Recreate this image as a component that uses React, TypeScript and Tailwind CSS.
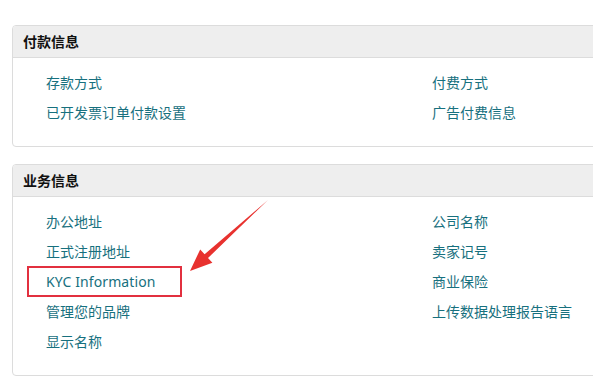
const font = { fontFamily: '"Noto Sans", "Noto Sans CJK SC", sans-serif' };

type Section = { title: string; left: string[]; right: string[] };

const sections: Section[] = [
  { title: "付款信息", left: ["存款方式", "已开发票订单付款设置"], right: ["付费方式", "广告付费信息"] },
  {
    title: "业务信息",
    left: ["办公地址", "正式注册地址", "KYC Information", "管理您的品牌", "显示名称"],
    right: ["公司名称", "卖家记号", "商业保险", "上传数据处理报告语言"],
  },
];

function Card({ s }: { s: Section }) {
  return (
    <div className="w-[640px] overflow-hidden rounded-[4px] border border-[#dcdcdc] bg-white">
      <div className="flex h-[32px] items-center border-b border-[#dcdcdc] bg-[#eeeeee] pl-[10px] text-[14px] font-bold text-[#111]">
        {s.title}
      </div>
      <div className="flex pb-[19px] pl-[33px] pt-[9px]">
        <div className="flex w-[386px] flex-col">
          {s.left.map((t) => (
            <div key={t} className="flex h-[30px] items-center">
              {t === "KYC Information" ? (
                <span className="-ml-[19px] flex h-[31px] w-[155px] items-center border-2 border-[#e2303f] pl-[17px] text-[14px] tracking-[0.1px] text-[#17707e]">
                  {t}
                </span>
              ) : (
                <span className="text-[14px] text-[#17707e]">{t}</span>
              )}
            </div>
          ))}
        </div>
        <div className="flex flex-col">
          {s.right.map((t) => (
            <div key={t} className="flex h-[30px] items-center text-[14px] text-[#17707e]">
              {t}
            </div>
          ))}
        </div>
      </div>
    </div>
  );
}

export default function App() {
  return (
    <div className="relative h-[389px] w-[593px] overflow-hidden bg-white" style={font}>
      <div className="flex flex-col gap-[17px] pl-[12px] pt-[25px]">
        {sections.map((s) => (
          <Card key={s.title} s={s} />
        ))}
      </div>
      {/* annotation arrow */}
      <svg className="absolute left-0 top-0" width="593" height="389">
        <polygon
          points="268,200 208,258 212.4,262.8 190,271 200.2,249.4 204.6,254.2"
          fill="#e8322f"
        />
      </svg>
    </div>
  );
}
